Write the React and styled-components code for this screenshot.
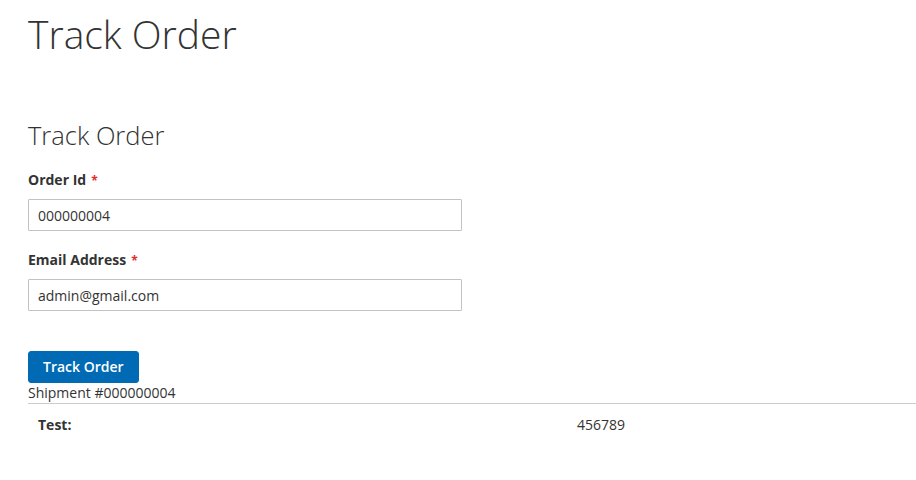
import React from 'react';
import styled, { createGlobalStyle } from 'styled-components';

const GlobalStyle = createGlobalStyle`
  body {
    margin: 0;
    background: #fff;
    color: #333;
    font-family: 'Open Sans', 'Helvetica Neue', Helvetica, Arial, sans-serif;
    font-size: 14px;
    line-height: 1.42857143;
  }
  * { box-sizing: border-box; }
`;

function App() {
  return (
    <>
      <GlobalStyle />
      <Page>
        <PageTitle>Track Order</PageTitle>
        <Form onSubmit={(e) => e.preventDefault()}>
          <Legend>Track Order</Legend>
          <Field>
            <Label htmlFor='order-id'>Order Id</Label>
            <Input id='order-id' type='text' defaultValue='000000004' />
          </Field>
          <Field>
            <Label htmlFor='email'>Email Address</Label>
            <Input id='email' type='email' defaultValue='admin@gmail.com' />
          </Field>
          <Button type='submit'>Track Order</Button>
        </Form>
        <Shipment>Shipment #000000004</Shipment>
        <InfoTable>
          <tbody>
            <tr>
              <Th>Test:</Th>
              <Td>456789</Td>
            </tr>
          </tbody>
        </InfoTable>
      </Page>
    </>
  );
}

export default App;

// Styled Components
const Page = styled.div`
  padding-left: 28px;
`;

const PageTitle = styled.h1`
  margin: 0;
  padding-top: 12px;
  font-size: 39px;
  font-weight: 300;
  line-height: 44px;
  color: #333;
`;

const Form = styled.form`
  width: 434px;
  padding-top: 64px;
`;

const Legend = styled.h2`
  margin: 0 0 19px;
  font-size: 25.5px;
  font-weight: 300;
  line-height: 31px;
  color: #333;
`;

const Field = styled.div`
  display: flex;
  flex-direction: column;
  gap: 8px;
  margin-bottom: 19px;
`;

const Label = styled.label`
  font-weight: 700;
  font-size: 14px;
  line-height: 20px;
  &::after {
    content: '*';
    color: #e02b27;
    margin-left: 5px;
    font-size: 12px;
  }
`;

const Input = styled.input`
  width: 434px;
  height: 32px;
  padding: 0 9px;
  border: 1px solid #c2c2c2;
  border-radius: 1px;
  font-family: 'Open Sans', 'Helvetica Neue', Helvetica, Arial, sans-serif;
  font-size: 14px;
  color: #333;
  background: #fff;
  outline: none;
`;

const Button = styled.button`
  display: block;
  margin-top: 40px;
  height: 32px;
  padding: 0 14px;
  background: #006bb4;
  border: 1px solid #006bb4;
  border-radius: 3px;
  color: #fff;
  font-family: 'Open Sans', 'Helvetica Neue', Helvetica, Arial, sans-serif;
  font-size: 14px;
  font-weight: 600;
  line-height: 20px;
  cursor: pointer;
`;

const Shipment = styled.div`
  line-height: 20px;
  border-bottom: 1px solid #cccccc;
`;

const InfoTable = styled.table`
  width: 100%;
  border-collapse: collapse;
`;

const Th = styled.th`
  width: 539px;
  padding: 11px 10px 10px;
  text-align: left;
  font-weight: 700;
`;

const Td = styled.td`
  padding: 11px 10px 10px;
`;
